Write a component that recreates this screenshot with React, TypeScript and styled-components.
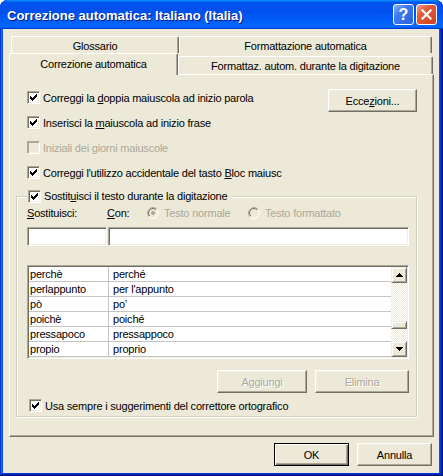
import React, { useId } from "react";
import styled, { createGlobalStyle, css } from "styled-components";

const face = "#ECE9D8";
const light = "#F1EFE2";
const shadow = "#ACA899";
const dark = "#716F64";
const grayText = "#ACA899";

const GlobalStyle = createGlobalStyle`
  html, body { margin: 0; padding: 0; background: #fff; }
  body {
    font-family: "Liberation Sans", Arial, sans-serif;
    font-size: 11px;
    letter-spacing: -0.2px;
    color: #000;
  }
  * { box-sizing: border-box; }
`;

const Window = styled.div`
  width: 443px;
  height: 476px;
  display: flex;
  flex-direction: column;
  border-radius: 8px 8px 0 0;
  overflow: hidden;
  background: #0055ea;
  box-shadow: inset -1px -1px #00138c, inset 1px 1px #0831d9,
    inset -2px -2px #001ea0, inset 2px 2px #166aee, inset -3px -3px #003bda,
    inset 3px 3px #0855dd;
`;

const TitleBar = styled.div`
  height: 29px;
  flex: none;
  display: flex;
  align-items: center;
  justify-content: space-between;
  padding: 0 6px 0 7px;
  background: linear-gradient(
    180deg,
    #0997ff,
    #0053ee 8%,
    #0050ee 40%,
    #06f 88%,
    #06f 93%,
    #005bff 95%,
    #003dd7 96%,
    #003dd7
  );
`;

const Title = styled.div`
  margin-top: 2px;
  color: #fff;
  font-weight: bold;
  font-size: 13px;
  letter-spacing: 0;
  text-shadow: 1px 1px #0a1883;
  white-space: nowrap;
`;

const CaptionButtons = styled.div`
  display: flex;
  gap: 2px;
`;

const CaptionButton = styled.div<{ $close?: boolean }>`
  width: 21px;
  height: 21px;
  border: 1px solid #fff;
  border-radius: 3px;
  display: flex;
  align-items: center;
  justify-content: center;
  color: #fff;
  font-weight: bold;
  font-size: 16px;
  letter-spacing: 0;
  background: ${(p) =>
    p.$close
      ? "linear-gradient(135deg, #f3a08a 0%, #e25b3c 35%, #d2421f 100%)"
      : "linear-gradient(135deg, #8fb3f7 0%, #3f7bf0 35%, #2b62dc 100%)"};
`;

const Body = styled.div`
  flex: 1;
  margin: 0 4px 3px 3px;
  background: ${face};
  padding: 7px 5px 0 6px;
  display: flex;
  flex-direction: column;
`;

const TabRow = styled.div<{ $back?: boolean }>`
  display: flex;
  align-items: flex-end;
  height: ${(p) => (p.$back ? 17 : 21)}px;
  padding-left: ${(p) => (p.$back ? 2 : 0)}px;
`;

const Tab = styled.div<{ $w: number; $selected?: boolean; $back?: boolean }>`
  position: relative;
  width: ${(p) => p.$w}px;
  flex: none;
  height: ${(p) => (p.$selected ? 22 : p.$back ? 17 : 18)}px;
  margin-bottom: ${(p) => (p.$selected ? -1 : 0)}px;
  z-index: ${(p) => (p.$selected ? 1 : 0)};
  background: ${face};
  border-top: 1px solid #fff;
  border-left: 1px solid #fff;
  border-right: 1px solid ${dark};
  border-radius: 2px 2px 0 0;
  box-shadow: inset -1px 0 ${shadow};
  text-align: center;
  line-height: 13px;
  padding-top: ${(p) => (p.$selected ? 4 : 3)}px;
  white-space: nowrap;
`;

const Panel = styled.div`
  height: 363px;
  flex: none;
  border: 1px solid;
  border-color: #fff ${dark} ${dark} #fff;
  box-shadow: inset -1px -1px ${shadow};
  padding: 10px 16px 0 6px;
`;

const TopSection = styled.div`
  display: flex;
  justify-content: space-between;
  align-items: flex-start;
`;

const Options = styled.div`
  display: flex;
  flex-direction: column;
  padding-left: 11px;
`;

const CheckRow = styled.div<{ $disabled?: boolean; $h?: number }>`
  display: flex;
  align-items: center;
  gap: 3px;
  height: ${(p) => p.$h ?? 25}px;
  color: ${(p) => (p.$disabled ? grayText : "#000")};
  white-space: nowrap;
`;

const Box = styled.span<{ $disabled?: boolean }>`
  width: 13px;
  height: 13px;
  flex: none;
  border: 1px solid;
  border-color: ${shadow} #fff #fff ${shadow};
  box-shadow: inset 1px 1px ${(p) => (p.$disabled ? shadow : dark)},
    inset -1px -1px ${light};
  background: ${(p) => (p.$disabled ? face : "#fff")};
  display: flex;
  align-items: center;
  justify-content: center;
`;

const Key = styled.span`
  text-decoration: underline;
  text-underline-offset: 1px;
`;

const Button = styled.button<{ $w: number; $default?: boolean }>`
  width: ${(p) => p.$w}px;
  height: 23px;
  flex: none;
  padding: 0;
  font: inherit;
  letter-spacing: inherit;
  background: ${face};
  color: #000;
  border: 1px solid;
  border-color: #fff ${dark} ${dark} #fff;
  box-shadow: inset -1px -1px ${shadow}, inset 1px 1px ${light};
  ${(p) =>
    p.$default &&
    css`
      border-color: #000;
      box-shadow: inset 1px 1px #fff, inset -1px -1px ${dark},
        inset -2px -2px ${shadow};
    `}
  &:disabled {
    color: ${grayText};
    text-shadow: 1px 1px #fff;
  }
`;

const Group = styled.fieldset`
  margin: 4px 0 0 0;
  padding: 2px 7px 3px 10px;
  border: 1px solid #d0d0bf;
  box-shadow: inset 1px 1px #fff, 1px 1px #fff;
  min-inline-size: 0;
`;

const Legend = styled.legend`
  padding: 0 5px 0 1px;
  background: ${face};
`;

const LabelsRow = styled.div`
  display: flex;
  align-items: center;
  height: 16px;
  white-space: nowrap;
`;

const Cell = styled.div<{ $w?: number; $disabled?: boolean }>`
  width: ${(p) => (p.$w ? `${p.$w}px` : "auto")};
  flex: none;
  display: flex;
  align-items: center;
  gap: 5px;
  color: ${(p) => (p.$disabled ? grayText : "#000")};
`;

const sunken = css`
  border: 1px solid;
  border-color: ${shadow} #fff #fff ${shadow};
  box-shadow: inset 1px 1px ${dark}, inset -1px -1px ${light};
  background: #fff;
`;

const InputsRow = styled.div`
  display: flex;
  gap: 1px;
  margin-top: 6px;
`;

const TextField = styled.div<{ $w?: number }>`
  ${sunken}
  height: 19px;
  ${(p) => (p.$w ? `width: ${p.$w}px; flex: none;` : "flex: 1;")}
`;

const ListBox = styled.div`
  ${sunken}
  margin-top: 19px;
  height: 94px;
  padding: 1px;
  display: flex;
`;

const Rows = styled.div`
  flex: 1;
  display: flex;
  flex-direction: column;
`;

const Row = styled.div`
  display: flex;
  height: 15px;
  border-bottom: 1px solid #c4c4c4;
  line-height: 14px;
  white-space: nowrap;
`;

const KeyCol = styled.div`
  width: 80px;
  flex: none;
  padding-left: 1px;
  border-right: 1px solid #c4c4c4;
`;

const ValueCol = styled.div`
  flex: 1;
  padding-left: 4px;
`;

const ScrollBar = styled.div`
  width: 16px;
  flex: none;
  display: flex;
  flex-direction: column;
`;

const raised = css`
  background: ${face};
  border: 1px solid;
  border-color: ${light} ${dark} ${dark} ${light};
  box-shadow: inset 1px 1px #fff, inset -1px -1px ${shadow};
`;

const ScrollButton = styled.div`
  ${raised}
  height: 16px;
  flex: none;
  display: flex;
  align-items: center;
  justify-content: center;
`;

const Track = styled.div`
  flex: 1;
  background: repeating-conic-gradient(${face} 0% 25%, #fff 0% 50%) 0 0 / 2px
    2px;
`;

const Thumb = styled.div<{ $top: number }>`
  ${raised}
  height: 8px;
  margin-top: ${(p) => p.$top}px;
`;

const ButtonsRow = styled.div<{ $mt: number; $gap: number; $pr?: number }>`
  display: flex;
  justify-content: flex-end;
  gap: ${(p) => p.$gap}px;
  margin-top: ${(p) => p.$mt}px;
  padding-right: ${(p) => p.$pr ?? 0}px;
`;

const Check: React.FC<{ checked?: boolean; disabled?: boolean }> = ({
  checked,
  disabled,
}) => (
  <Box $disabled={disabled}>
    {checked && (
      <svg width="7" height="7" viewBox="0 0 7 7" shapeRendering="crispEdges">
        <path
          fill="#000"
          d="M6 0h1v1h-1z M5 1h2v1h-2z M0 2h1v1h-1z M4 2h3v1h-3z M0 3h2v1h-2z M3 3h3v1h-3z M0 4h5v1h-5z M1 5h3v1h-3z M2 6h1v1h-1z"
        />
      </svg>
    )}
  </Box>
);

const Radio: React.FC<{ checked?: boolean }> = ({ checked }) => {
  const id = useId().replace(/:/g, "");
  return (
    <svg width="12" height="12" viewBox="0 0 12 12" style={{ flex: "none" }}>
      <defs>
        <linearGradient id={`o${id}`} x1="0" y1="0" x2="1" y2="1">
          <stop offset="0.5" stopColor={shadow} />
          <stop offset="0.5" stopColor="#fff" />
        </linearGradient>
        <linearGradient id={`i${id}`} x1="0" y1="0" x2="1" y2="1">
          <stop offset="0.5" stopColor={dark} />
          <stop offset="0.5" stopColor={light} />
        </linearGradient>
      </defs>
      <circle cx="6" cy="6" r="5.5" fill={face} stroke={`url(#o${id})`} />
      <circle cx="6" cy="6" r="4.5" fill="none" stroke={`url(#i${id})`} />
      {checked && <circle cx="6" cy="6" r="2" fill={grayText} />}
    </svg>
  );
};

const Arrow: React.FC<{ down?: boolean }> = ({ down }) => (
  <svg
    width="7"
    height="4"
    viewBox="0 0 7 4"
    shapeRendering="crispEdges"
    style={down ? { transform: "scaleY(-1)" } : undefined}
  >
    <path
      fill="#000"
      d="M3 0h1v1h-1z M2 1h3v1h-3z M1 2h5v1h-5z M0 3h7v1h-7z"
    />
  </svg>
);

const replacements: [string, string][] = [
  ["perchè", "perché"],
  ["perlappunto", "per l'appunto"],
  ["pò", "po’"],
  ["poichè", "poiché"],
  ["pressapoco", "pressappoco"],
  ["propio", "proprio"],
];

// posizione del cursore nella lista (voci prima di "perchè")
const totalEntries = 640;
const firstVisible = 430;
const trackHeight = 58;
const thumbHeight = 8;
const thumbTop = Math.round(
  ((trackHeight - thumbHeight) * firstVisible) /
    (totalEntries - replacements.length)
) + 4;

export default function App() {
  return (
    <>
      <GlobalStyle />
      <Window>
        <TitleBar>
          <Title>Correzione automatica: Italiano (Italia)</Title>
          <CaptionButtons>
            <CaptionButton>?</CaptionButton>
            <CaptionButton $close>
              <svg width="11" height="11" viewBox="0 0 11 11">
                <path
                  d="M1.5 1.5 L9.5 9.5 M9.5 1.5 L1.5 9.5"
                  stroke="#fff"
                  strokeWidth="2.2"
                  strokeLinecap="square"
                />
              </svg>
            </CaptionButton>
          </CaptionButtons>
        </TitleBar>

        <Body>
          <TabRow $back>
            <Tab $w={168} $back>
              Glossario
            </Tab>
            <Tab $w={253} $back>
              Formattazione automatica
            </Tab>
          </TabRow>
          <TabRow>
            <Tab $w={169} $selected>
              Correzione automatica
            </Tab>
            <Tab $w={255}>Formattaz. autom. durante la digitazione</Tab>
          </TabRow>

          <Panel>
            <TopSection>
              <Options>
                <CheckRow>
                  <Check checked />
                  <span>
                    Correggi la <Key>d</Key>oppia maiuscola ad inizio parola
                  </span>
                </CheckRow>
                <CheckRow>
                  <Check checked />
                  <span>
                    Inserisci la <Key>m</Key>aiuscola ad inizio frase
                  </span>
                </CheckRow>
                <CheckRow $disabled>
                  <Check disabled />
                  <span>Iniziali dei giorni maiuscole</span>
                </CheckRow>
                <CheckRow>
                  <Check checked />
                  <span>
                    Correggi l'utilizzo accidentale del tasto <Key>B</Key>loc
                    maiusc
                  </span>
                </CheckRow>
              </Options>
              <Button $w={89} style={{ marginTop: 4 }}>
                Ecce<Key>z</Key>ioni...
              </Button>
            </TopSection>

            <Group>
              <Legend>
                <CheckRow $h={14}>
                  <Check checked />
                  <span>
                    Sostit<Key>u</Key>isci il testo durante la digitazione
                  </span>
                </CheckRow>
              </Legend>

              <LabelsRow>
                <Cell $w={80}>
                  <span>
                    <Key>S</Key>ostituisci:
                  </span>
                </Cell>
                <Cell $w={40}>
                  <span>
                    <Key>C</Key>on:
                  </span>
                </Cell>
                <Cell $w={101} $disabled>
                  <Radio checked />
                  Testo normale
                </Cell>
                <Cell $disabled>
                  <Radio />
                  Testo formattato
                </Cell>
              </LabelsRow>

              <InputsRow>
                <TextField $w={80} />
                <TextField />
              </InputsRow>

              <ListBox>
                <Rows>
                  {replacements.map(([from, to]) => (
                    <Row key={from}>
                      <KeyCol>{from}</KeyCol>
                      <ValueCol>{to}</ValueCol>
                    </Row>
                  ))}
                </Rows>
                <ScrollBar>
                  <ScrollButton>
                    <Arrow />
                  </ScrollButton>
                  <Track>
                    <Thumb $top={thumbTop} />
                  </Track>
                  <ScrollButton>
                    <Arrow down />
                  </ScrollButton>
                </ScrollBar>
              </ListBox>

              <ButtonsRow $mt={11} $gap={8}>
                <Button $w={90} disabled>
                  Aggiungi
                </Button>
                <Button $w={94} disabled>
                  Elimina
                </Button>
              </ButtonsRow>

              <CheckRow $h={15} style={{ marginTop: 5, marginLeft: 2 }}>
                <Check checked />
                <span>Usa sempre i suggerimenti del correttore ortografico</span>
              </CheckRow>
            </Group>
          </Panel>

          <ButtonsRow $mt={6} $gap={8} $pr={2}>
            <Button $w={75} $default>
              OK
            </Button>
            <Button $w={75}>Annulla</Button>
          </ButtonsRow>
        </Body>
      </Window>
    </>
  );
}
